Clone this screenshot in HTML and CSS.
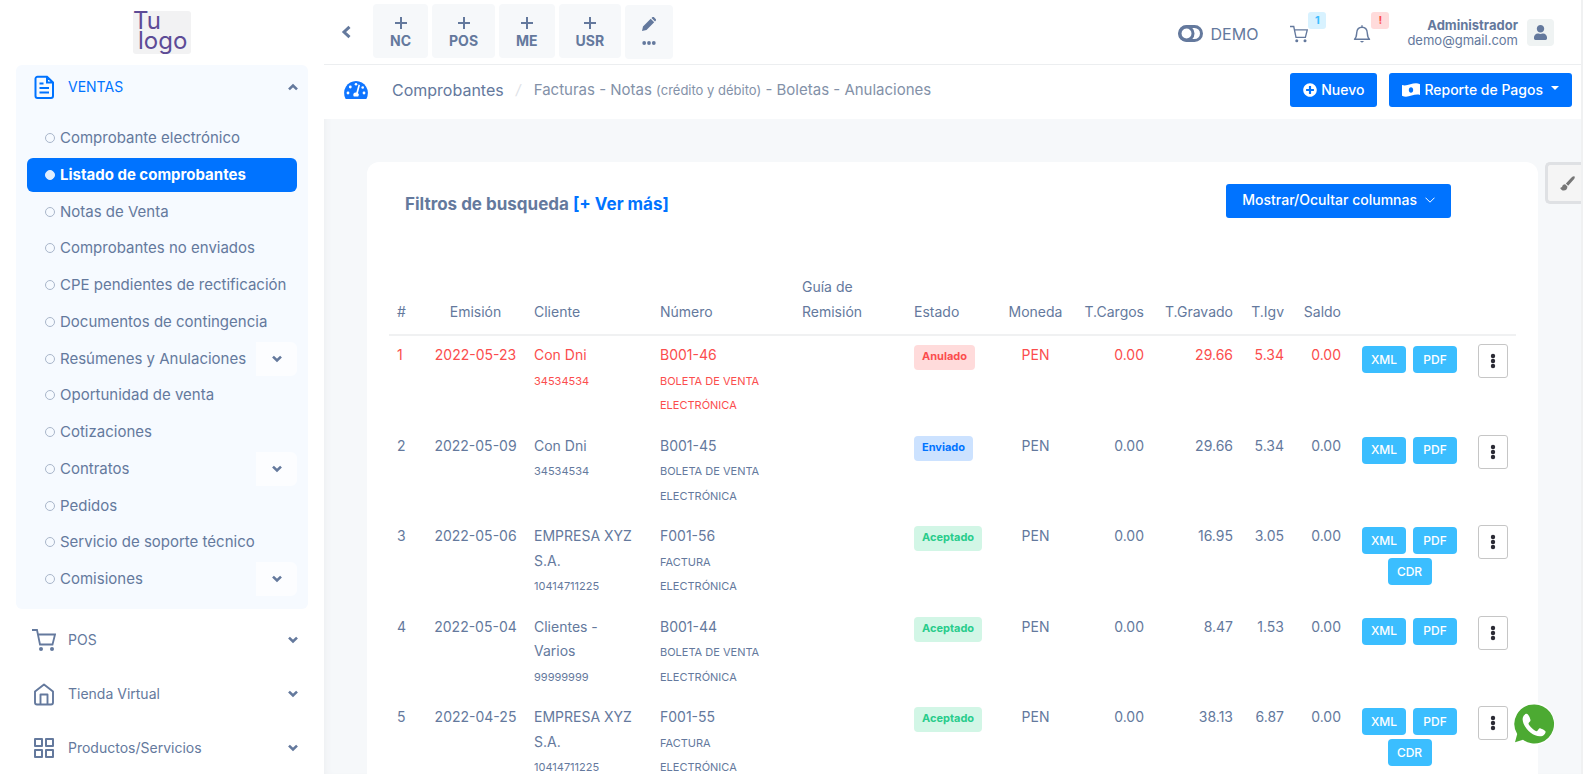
FILE: index.html
```html
<!DOCTYPE html>
<html lang="es">
<head>
<meta charset="utf-8">
<title>Listado de comprobantes</title>
<link rel="stylesheet" href="styles.css">
</head>
<body>
<svg class="sprite" aria-hidden="true">
  <symbol id="down" viewBox="0 0 12 12"><path d="M2 3.600 6 7.500 10 3.600" fill="none" stroke="currentColor" stroke-width="2.600"/></symbol>
  <symbol id="cart" viewBox="0 0 24 24"><path d="M0 2h5l3 14.500h12.500L23 6.500H6" fill="none" stroke="currentColor" stroke-width="1.800"/><circle cx="9" cy="21" r="2" fill="currentColor"/><circle cx="20" cy="21" r="2" fill="currentColor"/></symbol>
  <symbol id="plus" viewBox="0 0 12 12"><path d="M6 0v12M0 6h12" stroke="currentColor" stroke-width="2"/></symbol>
  <symbol id="dots" viewBox="0 0 6 16"><g fill="currentColor"><circle cx="3" cy="3" r="2.200"/><circle cx="3" cy="8" r="2.200"/><circle cx="3" cy="13" r="2.200"/></g></symbol>
</svg>
<div class="app">
  <aside class="sidebar">
    <a class="logo" href="#">Tu<br><span>logo</span></a>
    <nav>
      <section class="group">
        <a class="top active-top" href="#"><svg class="mi" viewBox="0 0 24 24"><path d="M15 1.800H5.500a2 2 0 0 0-2 2V21a2 2 0 0 0 2 2h13.500a2 2 0 0 0 2-2V7.500zM15 1.800V7.500h6M7.500 8.500h4M7.500 13h9.500M7.500 17.500h9.500" fill="none" stroke="currentColor" stroke-width="2"/></svg><span>VENTAS</span><svg class="chev up"><use href="#down"/></svg></a>
        <ul class="sub">
          <li><a href="#">Comprobante electrónico</a></li>
          <li class="current"><a href="#">Listado de comprobantes</a></li>
          <li><a href="#">Notas de Venta</a></li>
          <li><a href="#">Comprobantes no enviados</a></li>
          <li><a href="#">CPE pendientes de rectificación</a></li>
          <li><a href="#">Documentos de contingencia</a></li>
          <li><a href="#">Resúmenes y Anulaciones</a><button class="toggle" aria-label="Abrir Resúmenes"><svg class="chev"><use href="#down"/></svg></button></li>
          <li><a href="#">Oportunidad de venta</a></li>
          <li><a href="#">Cotizaciones</a></li>
          <li><a href="#">Contratos</a><button class="toggle" aria-label="Abrir Contratos"><svg class="chev"><use href="#down"/></svg></button></li>
          <li><a href="#">Pedidos</a></li>
          <li><a href="#">Servicio de soporte técnico</a></li>
          <li><a href="#">Comisiones</a><button class="toggle" aria-label="Abrir Comisiones"><svg class="chev"><use href="#down"/></svg></button></li>
        </ul>
      </section>
      <div class="rest">
        <a class="top" href="#"><svg class="mi"><use href="#cart"/></svg><span>POS</span><svg class="chev"><use href="#down"/></svg></a>
        <a class="top" href="#"><svg class="mi" viewBox="0 0 24 24"><path d="M3 9.500 12 2.500l9 7V20.500a2 2 0 0 1-2 2H5a2 2 0 0 1-2-2zM8.500 22.500V12.500h7v10" fill="none" stroke="currentColor" stroke-width="1.900" stroke-linejoin="round"/></svg><span>Tienda Virtual</span><svg class="chev"><use href="#down"/></svg></a>
        <a class="top" href="#"><svg class="mi" viewBox="0 0 24 24"><path d="M3 3h7v7H3zM14 3h7v7h-7zM3 14h7v7H3zM14 14h7v7h-7z" fill="none" stroke="currentColor" stroke-width="2" stroke-linejoin="round"/></svg><span>Productos/Servicios</span><svg class="chev"><use href="#down"/></svg></a>
      </div>
    </nav>
  </aside>

  <div class="page">
    <header class="topbar">
      <button class="back" aria-label="Contraer menú"><svg viewBox="0 0 12 14"><path d="M9.500 1.800 4 7l5.500 5.200" fill="none" stroke="currentColor" stroke-width="3"/></svg></button>
      <div class="quick">
        <a href="#"><svg><use href="#plus"/></svg>NC</a>
        <a href="#"><svg><use href="#plus"/></svg>POS</a>
        <a href="#"><svg><use href="#plus"/></svg>ME</a>
        <a href="#"><svg><use href="#plus"/></svg>USR</a>
        <a class="edit" href="#" aria-label="Editar accesos"><svg viewBox="0 0 14 14"><path d="M0 14l1-4.500L8.700 1.800l3.500 3.500L4.500 13zM9.500 1l1-.9a1 1 0 0 1 1.300 0L13.900 2.200a1 1 0 0 1 0 1.300l-.9 1z" fill="currentColor"/></svg><svg class="ell" viewBox="0 0 14 4"><g fill="currentColor"><circle cx="2.200" cy="2" r="1.900"/><circle cx="7" cy="2" r="1.900"/><circle cx="11.800" cy="2" r="1.900"/></g></svg></a>
      </div>
      <div class="account">
        <a class="demo" href="#"><svg viewBox="0 0 25 17"><rect x="1.500" y="1.500" width="22" height="14" rx="7" fill="none" stroke="currentColor" stroke-width="3"/><circle cx="8.500" cy="8.500" r="6.500" fill="none" stroke="currentColor" stroke-width="3"/></svg>DEMO</a>
        <a class="notice" href="#" aria-label="Carrito"><svg><use href="#cart"/></svg><b class="info">1</b></a>
        <a class="notice bell" href="#" aria-label="Avisos"><svg viewBox="0 0 18 18"><path d="M1.500 14.200c2-1.600 2-3 2.200-6.200C4 4 6 2.300 9 2.300S14 4 14.300 8c.2 3.200.2 4.600 2.200 6.200zM9 .3v2" fill="none" stroke="currentColor" stroke-width="1.400" stroke-linejoin="round"/><path d="M6.800 16h4.400L9 17.800z" fill="currentColor"/></svg><b class="alert">!</b></a>
        <a class="user" href="#"><span class="who"><strong>Administrador</strong><small>demo@gmail.com</small></span><span class="avatar"><svg viewBox="0 0 448 512"><path fill="currentColor" d="M224 256c70.700 0 128-57.300 128-128S294.700 0 224 0 96 57.300 96 128s57.300 128 128 128zm89.600 32h-16.700c-22.200 10.200-46.900 16-72.900 16s-50.600-5.800-72.900-16h-16.700C60.200 288 0 348.200 0 422.400V464c0 26.500 21.500 48 48 48h352c26.500 0 48-21.500 48-48v-41.600c0-74.200-60.200-134.400-134.400-134.400z"/></svg></span></a>
      </div>
    </header>

    <div class="crumbs">
      <a class="dash" href="#" aria-label="Panel"><svg viewBox="0 0 24 18"><path d="M12 0a12 12 0 0 0-10.600 17.400q.4.600 1 .6h19.200q.6 0 1-.6A12 12 0 0 0 12 0z" fill="currentColor"/><g fill="#fff"><circle cx="12" cy="3.300" r="1.300"/><circle cx="6.300" cy="6" r="1.400"/><circle cx="4" cy="12" r="1.400"/><circle cx="20" cy="12" r="1.400"/><circle cx="18.700" cy="6.500" r="1.300"/><path d="M14.500 3.500l1.500.5-2 8a2.500 2.500 0 0 1 .2 3.500h-4.400a2.500 2.500 0 0 1 2.500-4z"/></g></svg></a>
      <h1>Comprobantes</h1><i>/</i>
      <p>Facturas - Notas <small>(crédito y débito)</small> - Boletas - Anulaciones</p>
      <div class="actions">
        <button class="btn"><svg class="circ" viewBox="0 0 512 512"><path fill="currentColor" d="M256 8C119 8 8 119 8 256s111 248 248 248 248-111 248-248S393 8 256 8zm144 276c0 6.600-5.400 12-12 12h-92v92c0 6.600-5.400 12-12 12h-56c-6.600 0-12-5.400-12-12v-92h-92c-6.600 0-12-5.400-12-12v-56c0-6.600 5.400-12 12-12h92v-92c0-6.600 5.400-12 12-12h56c6.600 0 12 5.400 12 12v92h92c6.600 0 12 5.400 12 12v56z"/></svg>Nuevo</button>
        <button class="btn"><svg class="bill" viewBox="0 0 18 14"><path fill="currentColor" fill-rule="evenodd" d="M0 2C6 4 12-2 18 1.200V12C12 10 6 16 0 12.800zM9 4.200c-1.300 0-2.200 1.300-2.200 2.800S7.700 9.800 9 9.800 11.200 8.500 11.200 7 10.300 4.200 9 4.200z"/></svg>Reporte de Pagos<svg class="caret" viewBox="0 0 8 4"><path d="M0 0h8L4 4z" fill="currentColor"/></svg></button>
      </div>
    </div>

    <main>
      <section class="card">
        <div class="filters">
          <h2>Filtros de busqueda <a href="#">[+ Ver más]</a></h2>
          <button class="btn cols">Mostrar/Ocultar columnas<svg viewBox="0 0 10 6"><path d="M.5.700 5 5.200 9.500.700" fill="none" stroke="currentColor"/></svg></button>
        </div>
        <table>
          <colgroup><col class="c1"><col class="c2"><col class="c3"><col class="c4"><col class="c5"><col class="c6"><col class="c7"><col class="c8"><col class="c9"><col class="c10"><col class="c11"><col class="c12"><col class="c13"></colgroup>
          <thead><tr><th>#</th><th class="mid">Emisión</th><th>Cliente</th><th>Número</th><th>Guía de Remisión</th><th>Estado</th><th class="mid">Moneda</th><th class="num">T.Cargos</th><th class="num">T.Gravado</th><th class="num">T.Igv</th><th class="num">Saldo</th><th></th><th></th></tr></thead>
          <tbody>
            <tr class="void"><td>1</td><td class="mid">2022-05-23</td><td>Con Dni<br><small>34534534</small></td><td>B001-46<br><small>BOLETA DE VENTA ELECTRÓNICA</small></td><td></td><td><span class="tag red">Anulado</span></td><td class="mid">PEN</td><td class="num">0.00</td><td class="num">29.66</td><td class="num">5.34</td><td class="num">0.00</td><td><div class="files"><button>XML</button><button>PDF</button></div></td><td><button class="more" aria-label="Opciones"><svg><use href="#dots"/></svg></button></td></tr>
            <tr><td>2</td><td class="mid">2022-05-09</td><td>Con Dni<br><small>34534534</small></td><td>B001-45<br><small>BOLETA DE VENTA ELECTRÓNICA</small></td><td></td><td><span class="tag blue">Enviado</span></td><td class="mid">PEN</td><td class="num">0.00</td><td class="num">29.66</td><td class="num">5.34</td><td class="num">0.00</td><td><div class="files"><button>XML</button><button>PDF</button></div></td><td><button class="more" aria-label="Opciones"><svg><use href="#dots"/></svg></button></td></tr>
            <tr><td>3</td><td class="mid">2022-05-06</td><td>EMPRESA XYZ S.A.<br><small>10414711225</small></td><td>F001-56<br><small>FACTURA<br>ELECTRÓNICA</small></td><td></td><td><span class="tag green">Aceptado</span></td><td class="mid">PEN</td><td class="num">0.00</td><td class="num">16.95</td><td class="num">3.05</td><td class="num">0.00</td><td><div class="files"><button>XML</button><button>PDF</button><button>CDR</button></div></td><td><button class="more" aria-label="Opciones"><svg><use href="#dots"/></svg></button></td></tr>
            <tr><td>4</td><td class="mid">2022-05-04</td><td>Clientes -<br>Varios<br><small>99999999</small></td><td>B001-44<br><small>BOLETA DE VENTA ELECTRÓNICA</small></td><td></td><td><span class="tag green">Aceptado</span></td><td class="mid">PEN</td><td class="num">0.00</td><td class="num">8.47</td><td class="num">1.53</td><td class="num">0.00</td><td><div class="files"><button>XML</button><button>PDF</button></div></td><td><button class="more" aria-label="Opciones"><svg><use href="#dots"/></svg></button></td></tr>
            <tr><td>5</td><td class="mid">2022-04-25</td><td>EMPRESA XYZ S.A.<br><small>10414711225</small></td><td>F001-55<br><small>FACTURA<br>ELECTRÓNICA</small></td><td></td><td><span class="tag green">Aceptado</span></td><td class="mid">PEN</td><td class="num">0.00</td><td class="num">38.13</td><td class="num">6.87</td><td class="num">0.00</td><td><div class="files"><button>XML</button><button>PDF</button><button>CDR</button></div></td><td><button class="more" aria-label="Opciones"><svg><use href="#dots"/></svg></button></td></tr>
          </tbody>
        </table>
      </section>
    </main>
  </div>
</div>
<button class="brush" aria-label="Apariencia"><svg viewBox="0 0 16 16"><path d="M15.500.500c-1-.8-2.500.2-4 1.800L6.300 8l2.400 2.300 5.200-5.700c1.500-1.700 2.300-3.300 1.600-4.100zM5.500 8.800c-2 0-3 1-3.200 2.500-.1 1-.6 1.500-2.100 1.200C.7 14.500 2.300 15.500 4 15.500c2.500 0 4-1.800 3.900-4.300z" fill="currentColor"/></svg></button>
<a class="whats" href="#" aria-label="WhatsApp"><svg viewBox="0 0 46 46"><path d="M24 1A21.800 21.800 0 0 0 5 34L1 45l11.500-3A21.800 21.800 0 1 0 24 1z" fill="#fff"/><path d="M24 3.500A19.500 19.500 0 0 0 7.200 33L5 41.300l8-2.600A19.500 19.500 0 1 0 24 3.500z" fill="#4caa32"/><path d="M16.500 12.800c-1 0-4 1.700-3.900 5.500.4 8 9.500 17.200 17.500 17 3.500-.1 5.600-2.800 5.500-4.800 0-.9-5-3.400-6-3.300-.8.100-2 3-2.800 3-2.500-.2-8.200-5.700-8.300-7.800 0-.9 2-1.800 2-2.900.2-1.200-1.900-6.600-4-6.700z" fill="#fff"/></svg></a>
</body>
</html>
```
FILE: styles.css
```css
* { box-sizing: border-box; }
body {
  margin: 0;
  height: 100vh;
  overflow: hidden;
  position: relative;
  font: 400 14px/20px Inter, sans-serif;
  color: #64799d;
  background: #f6f8fa;
}
a { color: inherit; text-decoration: none; }
button { font: inherit; color: inherit; border: 0; padding: 0; background: none; cursor: pointer; }
svg { display: block; flex: none; }
.sprite { position: absolute; width: 0; height: 0; }
.app { display: flex; height: 100%; border-right: 2px solid #f0f1f2; }

/* Sidebar */
.sidebar { flex: none; width: 324px; padding: 11px 16px 0; background: #fff; }
.logo {
  display: block;
  width: 58px;
  height: 43px;
  margin: 0 auto 11px;
  border-radius: 3px;
  background: #f2f2f3;
  color: #5d4b96;
  font: 400 24px/20px Inter, sans-serif;
}
.logo span { padding-left: 5px; }
.group { padding-bottom: 13px; background: #f6faff; border-radius: 6px; }
.top { display: flex; align-items: center; height: 54px; padding: 0 9px 0 16px; }
.active-top { height: 44px; color: #0073ff; }
.mi { width: 24px; height: 24px; }
.top span { flex: 1; margin-left: 12px; }
.chev { width: 12px; height: 12px; }
.up { transform: rotate(180deg); color: #64799d; }
.sub {
  display: grid;
  align-content: space-between;
  min-height: 475px;
  margin: 12px 11px 0;
  padding: 0;
  list-style: none;
  font-size: 15px;
}
.sub li { display: flex; height: 34px; border-radius: 6px; }
.sub a { flex: 1; display: flex; align-items: center; gap: 5px; padding-left: 18px; white-space: nowrap; }
.sub a::before { content: ""; width: 8px; height: 8px; border: 1px solid #a9b6ca; border-radius: 50%; }
.current { background: #0073ff; color: #fff; font-weight: 700; }
.sub .current a::before { background: #e0eeff; border-color: #e0eeff; }
.toggle { display: grid; place-items: center; width: 41px; background: #fcfdff; border-radius: 0 6px 6px 0; }
.rest { padding-top: 4px; }

/* Top bar */
.page { flex: 1; min-width: 0; box-shadow: inset 6px 0 8px -6px #e9ebee; }
.topbar { display: flex; height: 65px; padding: 4px 27px 0 16px; background: #fff; border-bottom: 1px solid #eceef0; }
.back { width: 14px; height: 56px; }
.back svg { width: 12px; height: 14px; }
.quick { display: flex; gap: 4px; margin-left: 19px; font-weight: 700; }
.quick a {
  display: flex;
  flex-direction: column;
  align-items: center;
  height: 54px;
  padding: 13px 17px 0;
  gap: 2px;
  border-radius: 4px;
  background: #f6f8fa;
}
.quick svg { width: 12px; height: 12px; }
.quick .edit { margin-top: 1px; padding-top: 12px; gap: 10px; }
.quick .edit svg { width: 14px; height: 14px; }
.quick .edit .ell { height: 4px; }
.account { display: flex; margin-left: auto; }
.demo { display: flex; align-items: center; gap: 8px; height: 59px; font-size: 16px; }
.demo svg { width: 25px; height: 17px; }
.notice { display: flex; width: 36px; margin-left: 32px; padding-top: 21px; }
.notice svg { width: 18px; height: 18px; }
.notice b {
  width: 18px;
  height: 17px;
  margin-top: -13px;
  border-radius: 3px;
  font-size: 11px;
  line-height: 17px;
  text-align: center;
}
.bell { margin-left: 27px; }
.info { background: #d8f2ff; color: #3dbdff; }
.alert { background: #ffdbdb; color: #fb4d4d; }
.user { display: flex; gap: 9px; margin-left: 18px; padding-top: 14px; }
.who { display: flex; flex-direction: column; align-items: flex-end; font-size: 13px; line-height: 15px; }
.who strong { font-weight: 700; }
.who small { font-size: 13px; }
.avatar { display: grid; place-items: center; width: 27px; height: 27px; margin-top: 1px; border-radius: 4px; background: #eff3f3; }
.avatar svg { width: 13px; height: 15px; }

/* Breadcrumb bar */
.crumbs { display: flex; align-items: center; height: 54px; padding: 0 9px 4px 20px; background: #fff; }
.dash { color: #0f75ff; }
.dash svg { width: 24px; height: 18px; }
.crumbs h1 { margin: 0 12px 0 24px; font-size: 16px; font-weight: 400; }
.crumbs i { width: 6px; color: #dde1e6; }
.crumbs p { margin: 0 0 0 12px; font-size: 15px; color: #8391a8; }
.crumbs small { font-size: 13px; }
.actions { display: flex; gap: 12px; margin-left: auto; }
.btn {
  display: flex;
  align-items: center;
  justify-content: center;
  gap: 4px;
  height: 34px;
  padding: 0 13px;
  border-radius: 3px;
  background: #0073ff;
  color: #fff;
  font-weight: 500;
}
.circ { width: 14px; height: 14px; }
.bill { width: 18px; height: 14px; }
.caret { width: 8px; height: 4px; margin: -4px 0 0 4px; }

/* Card and table */
main { padding: 43px 43px 0; }
.card { padding: 22px 22px 0; background: #fff; border-radius: 12px; }
.filters { display: flex; justify-content: space-between; align-items: flex-start; padding: 0 65px 0 16px; }
.filters h2 { margin: 10px 0 0; font-size: 17px; font-weight: 700; line-height: 20px; }
.filters a { color: #0073ff; }
.cols { gap: 8px; padding: 0 16px 2px; }
.cols svg { width: 10px; height: 6px; }
table { width: 100%; margin-top: 57px; table-layout: fixed; border-collapse: separate; border-spacing: 0; line-height: 1.75; }
.c1 { width: 36px; } .c2 { width: 101px; } .c3 { width: 126px; } .c4 { width: 142px; }
.c5 { width: 112px; } .c6 { width: 92px; } .c7 { width: 75px; } .c8 { width: 79px; }
.c9 { width: 89px; } .c10 { width: 51px; } .c11 { width: 57px; } .c12 { width: 121px; } .c13 { width: 46px; }
th { padding: 0 8px 10px; font-weight: 400; text-align: left; vertical-align: bottom; border-bottom: 2px solid #f0f1f2; }
td { padding: 7px 8px 10px; vertical-align: top; }
td small { font-size: 11px; }
th.mid, td.mid { text-align: center; padding-left: 0; padding-right: 0; }
th.num, td.num { text-align: right; padding-left: 0; }
th:nth-child(5) { padding-right: 32px; }
.void { color: #fb4d4d; }
.tag { display: inline-block; height: 25px; padding: 0 8px; border-radius: 4px; font-size: 11px; font-weight: 700; line-height: 23px; }
.red { background: #ffdbdb; }
.blue { background: #cce2ff; color: #0073ff; }
.green { background: #d2f6e6; color: #28cc8b; }
.files { display: flex; flex-wrap: wrap; justify-content: center; gap: 4px 7px; padding-top: 3px; }
.files button { min-width: 44px; height: 27px; border-radius: 4px; background: #3bbeff; color: #fff; font-size: 12px; font-weight: 500; line-height: 16px; }
.more { display: grid; place-items: center; width: 30px; height: 34px; margin-top: 1px; border: 1px solid #c6c6c6; border-radius: 3px; color: #2b2b35; }
.more svg { width: 6px; height: 16px; }

/* Floating controls */
.brush {
  position: absolute;
  top: 162px;
  right: 2px;
  width: 36px;
  height: 42px;
  padding-left: 12px;
  border: 3px solid #dfe1e4;
  border-right: 0;
  border-radius: 5px 0 0 5px;
  background: #f5f5f5;
  color: #777;
}
.brush svg { width: 15px; height: 15px; }
.whats { position: absolute; right: 27px; bottom: 27px; }
.whats svg { width: 46px; height: 46px; }
```
